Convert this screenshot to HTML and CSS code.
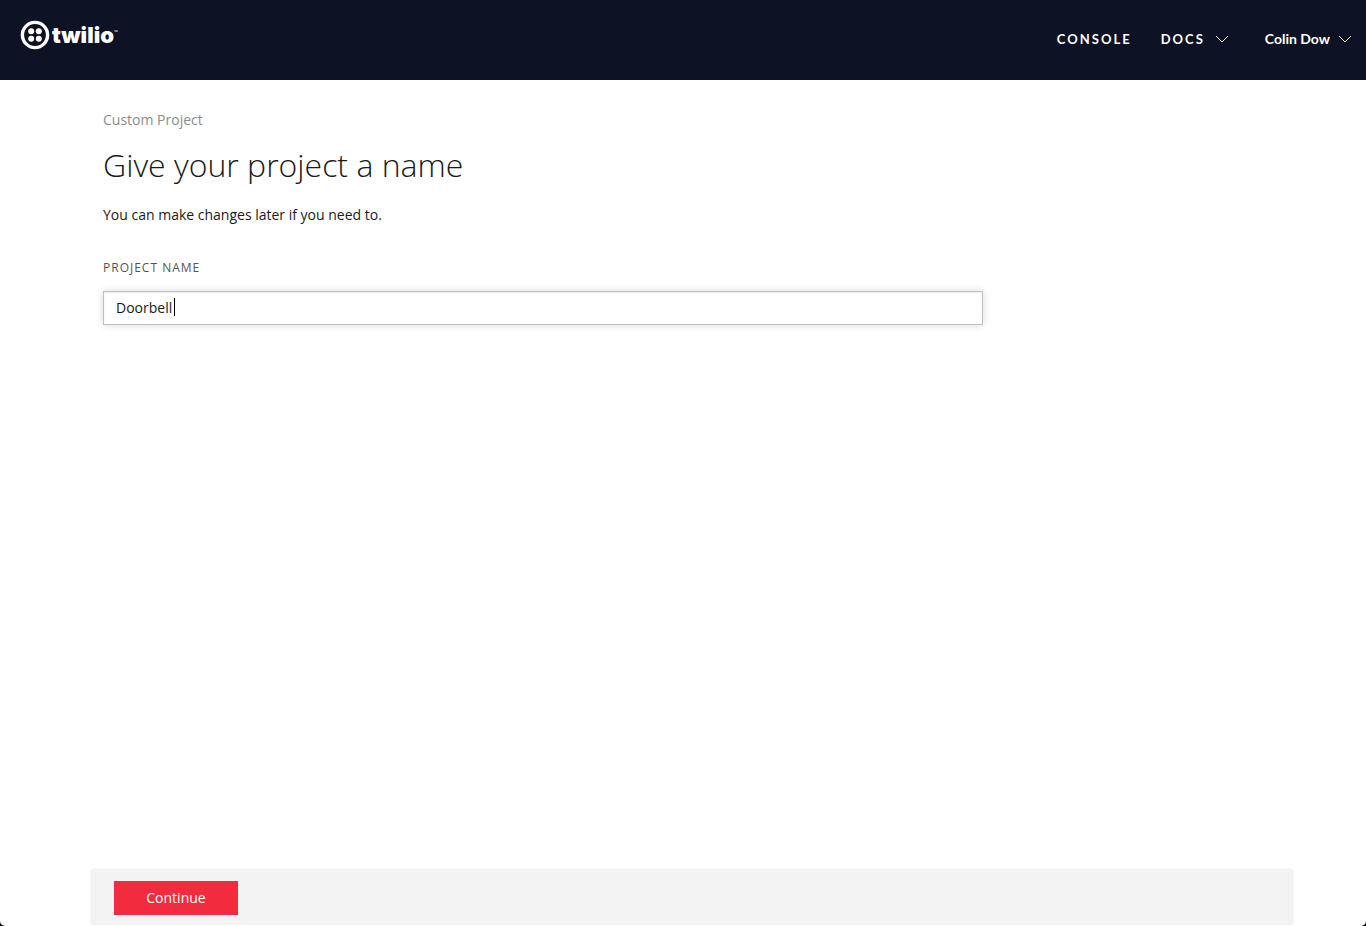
FILE: index.html
```html
<!DOCTYPE html>
<html lang="en">
<head>
<meta charset="utf-8">
<meta name="viewport" content="width=device-width, initial-scale=1">
<title>Give your project a name</title>
<link rel="stylesheet" href="styles.css">
</head>
<body>
<div class="page">
  <header class="topbar">
    <a class="logo" href="#" aria-label="twilio">
      <svg class="logo-mark" viewBox="0 0 30 30" aria-hidden="true">
        <circle cx="15" cy="15" r="12.6" fill="none" stroke="#fff" stroke-width="3.4"/>
        <circle cx="11.2" cy="11.2" r="3" fill="#fff"/>
        <circle cx="18.8" cy="11.2" r="3" fill="#fff"/>
        <circle cx="11.2" cy="18.8" r="3" fill="#fff"/>
        <circle cx="18.8" cy="18.8" r="3" fill="#fff"/>
      </svg>
      <span class="logo-word">twilio</span><span class="logo-tm">™</span>
    </a>
    <nav class="nav">
      <a class="nav-link" href="#">CONSOLE</a>
      <button class="nav-link" type="button">DOCS
        <svg class="chevron" viewBox="0 0 14 8" aria-hidden="true"><path d="M1 1l6 6 6-6"/></svg>
      </button>
      <button class="nav-link nav-user" type="button">Colin Dow
        <svg class="chevron" viewBox="0 0 14 8" aria-hidden="true"><path d="M1 1l6 6 6-6"/></svg>
      </button>
    </nav>
  </header>
  <main class="content">
    <p class="kicker">Custom Project</p>
    <h1 class="title">Give your project a name</h1>
    <p class="hint">You can make changes later if you need to.</p>
    <label class="label" for="project-name">PROJECT NAME</label>
    <div class="field">
      <input class="input" id="project-name" type="text" value="Doorbell">
      <span class="caret"></span>
    </div>
  </main>
  <footer class="actions">
    <button class="continue" type="button">Continue</button>
  </footer>
</div>
</body>
</html>
```

FILE: styles.css
```css
* { box-sizing: border-box; }
html { background: #000; }
body { margin: 0; font-family: "Open Sans", "Noto Sans", sans-serif; font-size: 14px; color: #1a1a1a; }
.page {
  display: flex;
  flex-direction: column;
  min-height: 100vh;
  padding-bottom: 1px;
  background: #fff;
  border-radius: 0 0 5px 5px;
}
.topbar {
  display: flex;
  justify-content: space-between;
  align-items: center;
  height: 80px;
  padding: 0 14px 2px 20px;
  background: #0d1224;
}
.logo {
  display: flex;
  align-items: center;
  color: #fff;
  text-decoration: none;
  margin-bottom: 8px;
}
.logo-mark { width: 30px; height: 30px; margin-right: 2px; }
.logo-word {
  font-family: Inter, sans-serif;
  font-weight: 900;
  font-size: 22px;
  line-height: 30px;
}
.logo-tm { font-size: 5px; line-height: 8px; margin-bottom: 6px; }
.nav { display: flex; align-items: center; }
.nav-link {
  display: flex;
  align-items: center;
  padding: 0;
  border: 0;
  background: none;
  color: #fff;
  font-family: Lato, sans-serif;
  font-size: 13px;
  font-weight: 700;
  line-height: 20px;
  letter-spacing: 2px;
  text-decoration: none;
  margin-left: 29px;
}
.nav-user { font-size: 14px; letter-spacing: 0; margin-left: 36px; }
.chevron {
  width: 14px;
  height: 8px;
  margin-left: 10px;
  fill: none;
  stroke: #fff;
}
.nav-user .chevron { margin-left: 8px; }
.content { flex: 1; width: 100%; padding: 29px 20px 20px 103px; }
.kicker { margin: 0; color: #8c8c8c; line-height: 22px; }
.title {
  margin: 12px 0 0;
  font-size: 32px;
  font-weight: 300;
  line-height: 44px;
}
.hint { margin: 17px 0 0; line-height: 22px; }
.label {
  display: block;
  margin-top: 32px;
  color: #555;
  font-size: 12px;
  line-height: 20px;
  letter-spacing: 1px;
}
.field { position: relative; max-width: 880px; margin-top: 13px; }
.input {
  display: block;
  width: 100%;
  height: 34px;
  padding: 0 12px 2px;
  border: 1px solid #bfbfbf;
  border-radius: 0;
  box-shadow: 0 0 8px rgba(0, 0, 0, .15), inset 0 1px 2px rgba(0, 0, 0, .08);
  color: #1a1a1a;
  font: inherit;
  outline: 0;
}
.caret { position: absolute; left: 71px; top: 7px; width: 1px; height: 18px; background: #000; }
.actions {
  margin: 0 74px 0 92px;
  padding: 11px 22px 10px;
  background: #f3f3f3;
  box-shadow: 0 0 3px rgba(0, 0, 0, .15);
  clip-path: inset(-4px -4px 0 -4px);
}
.continue {
  display: block;
  width: 124px;
  height: 34px;
  border: 0;
  padding: 0 0 2px;
  background: #f22b3f;
  color: #fff;
  font: inherit;
}
```
